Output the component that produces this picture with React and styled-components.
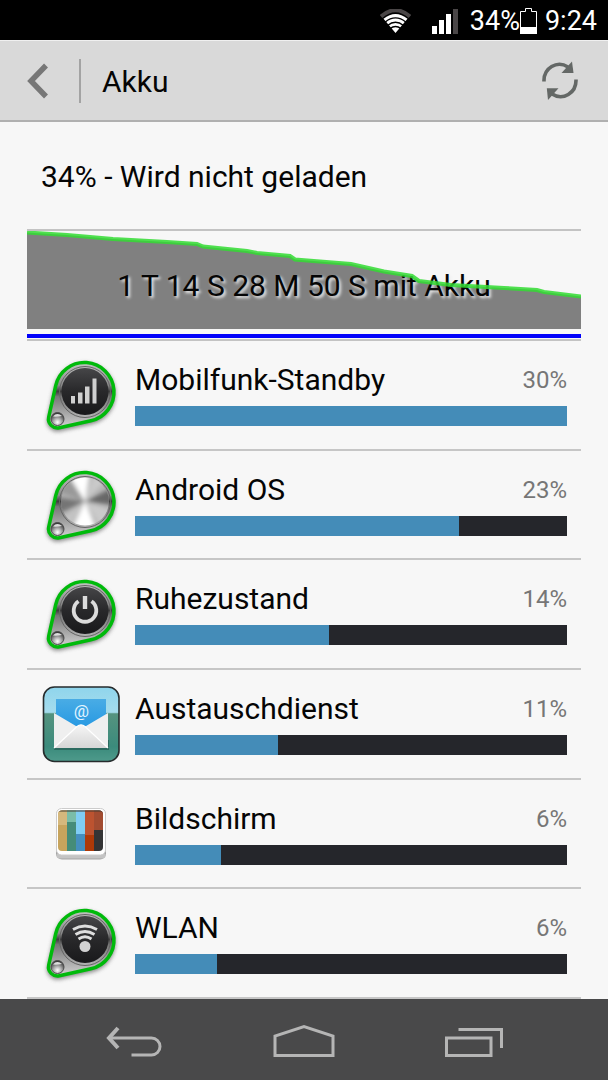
import React, { useId } from "react";
import styled, { createGlobalStyle } from "styled-components";

const GlobalStyle = createGlobalStyle`
  * {
    box-sizing: border-box;
  }

  body {
    margin: 0;
    background: #f7f7f7;
    color: #050505;
    font-family: Roboto, "Noto Sans", sans-serif;
  }
`;

const Screen = styled.div`
  display: flex;
  flex-direction: column;
  min-height: 100vh;
`;

const StatusBar = styled.div`
  display: flex;
  align-items: center;
  justify-content: flex-end;
  height: 40px;
  padding: 2px 11px 0 0;
  background: #000;
  color: #fff;
  font-size: 27px;
`;

const StatusGroup = styled.span`
  display: flex;
  align-items: center;
  margin-left: ${props => props.$space}px;
`;

const AppBar = styled.header`
  display: flex;
  align-items: center;
  height: 82px;
  background: #d9d9d9;
  border-top: 1px solid #f0f0f0;
  border-bottom: 2px solid #b0b0b0;
`;

const IconButton = styled.button`
  display: flex;
  align-items: center;
  justify-content: center;
  width: ${props => props.$width}px;
  height: 44px;
  padding: 0;
  border: 0;
  background: none;
`;

const BackButton = styled(IconButton)`
  padding-right: 4px;
  border-right: 2px solid #a3a3a3;
`;

const Title = styled.h1`
  flex: 1;
  margin: 0;
  padding: 2px 0 0 21px;
  font-size: 30px;
  font-weight: 400;
  line-height: 40px;
`;

const Content = styled.main`
  display: flex;
  flex: 1;
  flex-direction: column;
  padding: 0 27px;
`;

const ChargeState = styled.h2`
  margin: 0;
  padding: 35px 14px 32px;
  font-size: 30px;
  font-weight: 400;
  line-height: 40px;
`;

const History = styled.section`
  border-top: 2px solid #c3c3c3;
  border-bottom: 2px solid #c3c3c3;
`;

const Plot = styled.div`
  display: grid;
  align-items: center;
  height: 98px;

  > * {
    grid-area: 1 / 1;
  }
`;

const PlotLayer = styled.svg`
  display: block;
  width: 100%;
  height: 98px;
  overflow: hidden;
`;

const PlotCaption = styled.p`
  margin: 0;
  padding-top: 12px;
  font-size: 30px;
  line-height: 40px;
  text-align: center;
  text-shadow: 2px 2px 3px #eee;
`;

const ActivityLine = styled.div`
  height: 4px;
  margin: 5px 0 1px;
  background: #0000fa;
`;

const UsageList = styled.ul`
  display: flex;
  flex: 1;
  flex-direction: column;
  margin: 0;
  padding: 0;
  list-style: none;
`;

const UsageRow = styled.li`
  display: flex;
  flex: 1;
  align-items: center;
  min-height: 96px;
  padding-right: 14px;
  border-bottom: 2px solid #c6c6c6;
`;

const UsageIcon = styled.svg`
  flex: none;
  width: 108px;
  height: 90px;
`;

const UsageBody = styled.div`
  flex: 1;
  padding-bottom: 4px;
`;

const UsageHeading = styled.div`
  display: flex;
  align-items: center;
  justify-content: space-between;
  margin-bottom: 6px;
  line-height: 40px;
`;

const UsageName = styled.span`
  font-size: 30px;
`;

const UsagePercent = styled.span`
  color: #767676;
  font-size: 24px;
`;

const Track = styled.div`
  height: 20px;
  background: #25262b;
`;

const Fill = styled.div`
  height: 100%;
  background: #448cb8;
`;

const NavBar = styled.nav`
  display: flex;
  justify-content: center;
  height: 81px;
  padding-top: 20px;
  background: #49494a;
`;

const WifiStatus = () => (
  <svg width="31" height="24" viewBox="0 0 31 24" fill="none">
    <path d="M1 7.5Q15.500 -5 30 7.500" stroke="#4a4647" strokeWidth="4" />
    <path d="M3.500 9.800Q15.500 0.300 27.500 9.800L15.500 24Z" fill="#fff" />
    <path
      d="M5 13.200Q15.500 4.600 26 13.200M7.500 16.500Q15.500 10 23.500 16.500M10 19.600Q15.500 15.400 21 19.600"
      stroke="#000"
      strokeWidth="1.400"
    />
  </svg>
);

const SignalStatus = () => (
  <svg width="26" height="25" viewBox="0 0 26 25">
    <path d="M0 17h5v8H0zM7 11h5v14H7zM14 5h5v20h-5z" fill="#fff" />
    <path d="M21 0h5v25h-5z" fill="#4a4647" />
  </svg>
);

const BatteryStatus = () => (
  <svg width="17" height="26" viewBox="0 0 17 26">
    <path
      d="M.5 3.500H5.500V.5H11.500V3.500H16.500V25.500H.5Z"
      fill="none"
      stroke="#fff"
    />
    <path d="M0 19h17v7H0z" fill="#fff" />
  </svg>
);

const BackIcon = () => (
  <svg width="22" height="36" viewBox="0 0 22 36" fill="none">
    <path d="M19 2.500L4 18L19 33.500" stroke="#777" strokeWidth="5.500" />
  </svg>
);

const RefreshIcon = () => (
  <svg width="36" height="40" viewBox="0 0 36 40">
    <g fill="none" stroke="#646866" strokeWidth="3.600">
      <path d="M2 20.500C1.500 7 15 -1 26 6" />
      <path d="M34 18.500C34.500 32 21 40 10 33" />
    </g>
    <path d="M30 .5L31.500 12H19.500Z" fill="#646866" />
    <path d="M6 39L4.800 27.200H16.500Z" fill="#646866" />
  </svg>
);

const BatteryCurve =
  "0,1.5 40,4 86,8 140,11 170,13 176,15.5 220,20 230,22 263,25 268,28.500 324,33 357,40.5 385,45 392,50 424,54 477,57 510,59 517,61 554,65.5";

// Round knob on a teardrop tag, shared by all system entries
const KnobIcon = ({ metal, children }) => {
  const id = useId();
  const tag =
    "M18.700 66.100L25.700 34.600A29.500 29.500 0 1 1 60.900 69.800L29.400 76.800A9 9 0 0 1 18.700 66.100Z";

  return (
    <UsageIcon viewBox="-3 -1 108 90" aria-hidden="true">
      <defs>
        <linearGradient id={`${id}tag`} x1="0" y1="0" x2="0" y2="1">
          <stop offset="0" stopColor="#c4c4c4" />
          <stop offset=".35" stopColor="#8a8a8a" />
          <stop offset=".44" stopColor="#3c3c3c" />
          <stop offset=".52" stopColor="#777" />
          <stop offset="1" stopColor="#d2d2d2" />
        </linearGradient>
        <linearGradient id={`${id}face`} x1="0" y1="0" x2="0" y2="1">
          <stop offset="0" stopColor="#464648" />
          <stop offset=".5" stopColor="#28282a" />
          <stop offset="1" stopColor="#19191b" />
        </linearGradient>
        <radialGradient id={`${id}rivet`} cx=".5" cy=".75" r=".7">
          <stop offset="0" stopColor="#fff" />
          <stop offset=".45" stopColor="#aaa" />
          <stop offset="1" stopColor="#333" />
        </radialGradient>
        <filter id={`${id}shadow`} x="-20%" y="-20%" width="140%" height="140%">
          <feGaussianBlur stdDeviation="2" />
        </filter>
        <filter id={`${id}soft`}>
          <feGaussianBlur stdDeviation="2.200" />
        </filter>
        <clipPath id={`${id}clip`}>
          <circle cx="55" cy="40.500" r="24" />
        </clipPath>
      </defs>
      <path
        d={tag}
        transform="translate(0 2)"
        fill="#555"
        stroke="#555"
        strokeWidth="3"
        opacity=".7"
        filter={`url(#${id}shadow)`}
      />
      <path d={tag} fill={`url(#${id}tag)`} stroke="#00ba0b" strokeWidth="3.500" />
      <circle cx="55" cy="41" r="25.500" fill="none" stroke="#656565" />
      {metal ? (
        <g clipPath={`url(#${id}clip)`}>
          <circle cx="55" cy="40.500" r="24" fill="#b4b4b4" />
          <g filter={`url(#${id}soft)`}>
            <path d="M55 40.500L26 36V54Z" fill="#747474" />
            <path d="M55 40.500L84 26V44Z" fill="#686868" />
            <path d="M55 40.500L26 30L36 12Z" fill="#999" />
            <path d="M55 40.500L36 10H60Z" fill="#fff" />
            <path d="M55 40.500L64 12L78 18Z" fill="#c9c9c9" />
            <path d="M55 40.500L40 72H68Z" fill="#fff" />
            <path d="M55 40.500L84 50L72 68Z" fill="#cacaca" />
            <path d="M55 40.500L28 60L38 68Z" fill="#c4c4c4" />
          </g>
        </g>
      ) : (
        <circle cx="55" cy="40.500" r="23.500" fill={`url(#${id}face)`} />
      )}
      <circle cx="27.500" cy="68" r="6.500" fill={`url(#${id}rivet)`} stroke="#4c4c4c" />
      <path d="M23 65.500Q27 61 32 65Q27 66 23 65.500Z" fill="#ddd" />
      {children}
    </UsageIcon>
  );
};

const MobileIcon = () => (
  <KnobIcon>
    <path
      d="M41 45h4v7.500h-4zM48 41.500h4.500v11H48zM55 35.500h4.500v17H55zM62.500 27.500h4v25h-4z"
      fill="#d0d0d0"
    />
  </KnobIcon>
);

const AndroidIcon = () => <KnobIcon metal />;

const StandbyIcon = () => (
  <KnobIcon>
    <g fill="none" stroke="#dcdcdc" strokeWidth="3.800">
      <path d="M48.500 31.200A11.300 11.300 0 1 0 61.500 31.200" />
      <path d="M55 26V39" strokeWidth="4.400" />
    </g>
  </KnobIcon>
);

const WlanIcon = () => (
  <KnobIcon>
    <g fill="none" stroke="#dedede" strokeWidth="2.800">
      <path d="M43 30.500Q55 23.500 67 30.500" />
      <path d="M45.500 35.500Q55 29.500 64.500 35.500" />
      <path d="M48.500 40Q55 35.500 61.500 40" />
    </g>
    <circle cx="55" cy="47.500" r="5.500" fill="#d2d2d2" />
  </KnobIcon>
);

const MailIcon = () => (
  <UsageIcon viewBox="-3 -1 108 90" aria-hidden="true">
    <defs>
      <linearGradient id="mailSky" x1="0" y1="0" x2="0" y2="1">
        <stop offset="0" stopColor="#8fd5ec" />
        <stop offset=".34" stopColor="#a5dced" />
        <stop offset=".36" stopColor="#55937f" />
        <stop offset=".8" stopColor="#3b8b7c" />
        <stop offset="1" stopColor="#4e9a8b" />
      </linearGradient>
      <linearGradient id="mailLetter" x1="0" y1="0" x2="0" y2="1">
        <stop offset="0" stopColor="#49ace5" />
        <stop offset="1" stopColor="#1e94e2" />
      </linearGradient>
      <linearGradient id="mailFlap" x1="0" y1="0" x2="0" y2="1">
        <stop offset="0" stopColor="#f6f6f6" />
        <stop offset="1" stopColor="#d6d6d6" />
      </linearGradient>
    </defs>
    <rect
      x="13.500"
      y="7"
      width="75.500"
      height="74.500"
      rx="11"
      fill="url(#mailSky)"
      stroke="#262b2c"
      strokeWidth="1.600"
    />
    <path d="M24 60H79V70H24Z" fill="#2c6b60" />
    <path d="M26 19H76V40L51 55L26 40Z" fill="url(#mailLetter)" />
    <path d="M24 33L51 49L78 33V68H24Z" fill="#efefef" />
    <path d="M24 68L47 46.500Q51 43 55 46.500L78 68Z" fill="url(#mailFlap)" />
    <path
      d="M24 68L47 46.500Q51 43 55 46.500L78 68"
      fill="none"
      stroke="#fff"
      strokeWidth="1.200"
    />
    <text
      x="51.500"
      y="37"
      fill="#e3f5ff"
      fontFamily="Roboto, sans-serif"
      fontSize="17"
      textAnchor="middle"
    >
      @
    </text>
  </UsageIcon>
);

const DisplayIcon = () => (
  <UsageIcon viewBox="-3 -1 108 90" aria-hidden="true">
    <defs>
      <clipPath id="displayGlass">
        <rect x="28" y="20.500" width="45" height="40.500" rx="4" />
      </clipPath>
    </defs>
    <rect x="26" y="19" width="50" height="50.500" rx="6" fill="#a5a5a5" />
    <rect x="26.500" y="63" width="49" height="5.500" rx="3" fill="#c4c4c4" />
    <rect x="26.500" y="18.500" width="49" height="46.500" rx="5" fill="#fff" stroke="#ccc" />
    <g clipPath="url(#displayGlass)">
      <path d="M28 20h9v42h-9z" fill="#c7a45d" />
      <path d="M28 20h9v15h-9z" fill="#d5b87d" />
      <path d="M37 20h9v42h-9z" fill="#458c79" />
      <path d="M37 20h9v12h-9z" fill="#7abda8" />
      <path d="M46 20h9v42h-9z" fill="#458fbe" />
      <path d="M46 20h9v24h-9z" fill="#80cdf3" />
      <path d="M55 20h9v42h-9z" fill="#ae3907" />
      <path d="M55 20h9v25h-9z" fill="#bc5330" />
      <path d="M64 20h9v42h-9z" fill="#343435" />
      <path d="M64 20h9v20h-9z" fill="#a24c31" />
      <path d="M28 20h45v1.500h-45z" fill="#443a2e" />
    </g>
  </UsageIcon>
);

const NavBack = () => (
  <svg width="56" height="34" viewBox="0 0 56 34" fill="none">
    <g stroke="#b5b5b5" strokeWidth="3">
      <path d="M4 14H45.500A8 8 0 0 1 45.500 31H25.500" />
      <path d="M12 4L3 14L12 24" strokeWidth="4" />
    </g>
  </svg>
);

const NavHome = () => (
  <svg width="62" height="34" viewBox="0 0 62 34" fill="none">
    <path d="M2 31.500V12L31 2.500L60 12V31.500Z" stroke="#b5b5b5" strokeWidth="3" />
  </svg>
);

const NavRecents = () => (
  <svg width="58" height="34" viewBox="0 0 58 34" fill="none">
    <g stroke="#b5b5b5" strokeWidth="3">
      <path d="M1.500 14H46V31.500H1.500Z" />
      <path d="M13.500 5.500H56.500V24" />
    </g>
  </svg>
);

const usage = [
  { name: "Mobilfunk-Standby", percent: 30, level: 100, Icon: MobileIcon },
  { name: "Android OS", percent: 23, level: 75, Icon: AndroidIcon },
  { name: "Ruhezustand", percent: 14, level: 45, Icon: StandbyIcon },
  { name: "Austauschdienst", percent: 11, level: 33, Icon: MailIcon },
  { name: "Bildschirm", percent: 6, level: 20, Icon: DisplayIcon },
  { name: "WLAN", percent: 6, level: 19, Icon: WlanIcon }
];

const App = () => (
  <Screen>
    <GlobalStyle />
    <StatusBar>
      <StatusGroup $space={0}>
        <WifiStatus />
      </StatusGroup>
      <StatusGroup $space={21}>
        <SignalStatus />
      </StatusGroup>
      <StatusGroup $space={12}>
        34%
        <BatteryStatus />
      </StatusGroup>
      <StatusGroup $space={8}>9:24</StatusGroup>
    </StatusBar>
    <AppBar>
      <BackButton $width={81} aria-label="Zurück">
        <BackIcon />
      </BackButton>
      <Title>Akku</Title>
      <IconButton $width={96} aria-label="Aktualisieren">
        <RefreshIcon />
      </IconButton>
    </AppBar>
    <Content>
      <ChargeState>34% - Wird nicht geladen</ChargeState>
      <History>
        <Plot>
          <PlotLayer viewBox="0 0 554 98" preserveAspectRatio="none">
            <polygon points={`${BatteryCurve} 554,98 0,98`} fill="#808080" />
          </PlotLayer>
          <PlotCaption>1 T 14 S 28 M 50 S mit Akku</PlotCaption>
          <PlotLayer viewBox="0 0 554 98" preserveAspectRatio="none">
            <polyline
              points={BatteryCurve}
              fill="none"
              stroke="#32dc32"
              strokeOpacity=".85"
              strokeWidth="4"
            />
          </PlotLayer>
        </Plot>
        <ActivityLine />
      </History>
      <UsageList>
        {usage.map(({ name, percent, level, Icon }) => (
          <UsageRow key={name}>
            <Icon />
            <UsageBody>
              <UsageHeading>
                <UsageName>{name}</UsageName>
                <UsagePercent>{percent}%</UsagePercent>
              </UsageHeading>
              <Track>
                <Fill style={{ width: `${level}%` }} />
              </Track>
            </UsageBody>
          </UsageRow>
        ))}
      </UsageList>
    </Content>
    <NavBar>
      <IconButton $width={170} aria-label="Zurück">
        <NavBack />
      </IconButton>
      <IconButton $width={170} aria-label="Startbildschirm">
        <NavHome />
      </IconButton>
      <IconButton $width={170} aria-label="Letzte Apps">
        <NavRecents />
      </IconButton>
    </NavBar>
  </Screen>
);

export default App;
